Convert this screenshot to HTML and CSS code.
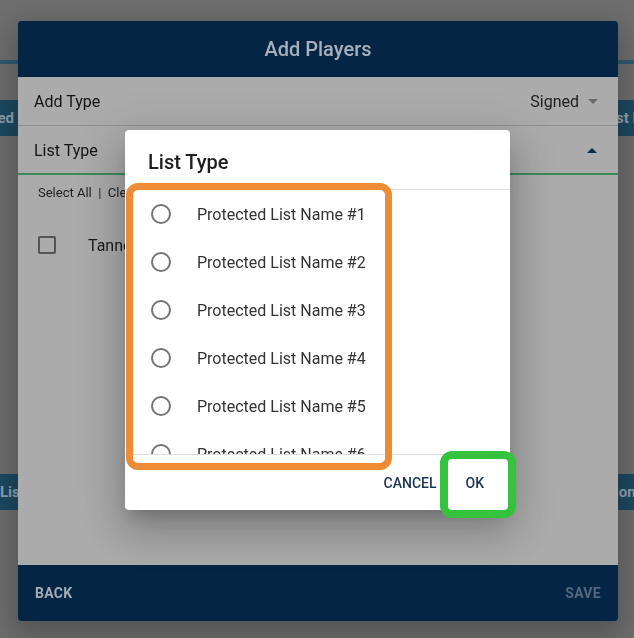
FILE: index.html
```html
<!DOCTYPE html>
<html>
<head>
<meta charset="utf-8">
<link rel="stylesheet" href="styles.css">
</head>
<body>
<div class="page">
  <div class="page-line"></div>
  <div class="page-row row-a">
    <span class="chip chip-left">Signed</span>
    <span class="chip chip-right">List N</span>
  </div>
  <div class="page-row row-b">
    <span class="chip chip-left2">List</span>
    <span class="chip chip-right2">Position</span>
  </div>
</div>

<div class="modal">
  <div class="modal-header">Add Players</div>
  <div class="modal-body">
    <div class="field">
      <span class="field-label">Add Type</span>
      <span class="field-value">Signed <span class="caret-down"></span></span>
    </div>
    <div class="field field-active">
      <span class="field-label">List Type</span>
      <span class="caret-up"></span>
    </div>
    <div class="select-links">Select All &nbsp;|&nbsp; Clear All</div>
    <div class="player">
      <span class="checkbox"></span>
      <span class="player-name">Tanner Houck</span>
    </div>
  </div>
  <div class="modal-footer">
    <span class="foot-btn">BACK</span>
    <span class="foot-btn disabled">SAVE</span>
  </div>
</div>

<div class="dialog">
  <div class="dialog-title">List Type</div>
  <div class="dialog-list">
    <div class="option"><span class="radio"></span><span>Protected List Name #1</span></div>
    <div class="option"><span class="radio"></span><span>Protected List Name #2</span></div>
    <div class="option"><span class="radio"></span><span>Protected List Name #3</span></div>
    <div class="option"><span class="radio"></span><span>Protected List Name #4</span></div>
    <div class="option"><span class="radio"></span><span>Protected List Name #5</span></div>
    <div class="option"><span class="radio"></span><span>Protected List Name #6</span></div>
    <div class="option"><span class="radio"></span><span>Protected List Name #7</span></div>
  </div>
  <div class="dialog-actions">
    <span class="dlg-btn">CANCEL</span>
    <span class="dlg-btn">OK</span>
  </div>
</div>

<div class="mark mark-orange"></div>
<div class="mark mark-green"></div>
</body>
</html>
```

FILE: styles.css
```css
* { box-sizing: border-box; }
html, body { margin: 0; padding: 0; }
body {
  width: 634px;
  height: 638px;
  overflow: hidden;
  background: #6f6f6f;
  font-family: Roboto, "Liberation Sans", sans-serif;
}
.page {
  height: 638px;
  padding-top: 60px;
}
.page-line {
  height: 4px;
  background: #2f5c73;
}
.page-row {
  display: flex;
  justify-content: space-between;
  height: 36px;
}
.row-a { margin-top: 36px; }
.row-b { margin-top: 338px; }
.chip {
  background: #1c4a62;
  color: #8ea3b0;
  font-weight: 700;
  font-size: 15px;
  line-height: 36px;
  width: 80px;
  white-space: nowrap;
  overflow: hidden;
}
.chip-left { margin-left: -62px; text-align: right; padding-right: 4px; }
.chip-right { margin-right: -44px; padding-left: 6px; }
.chip-left2 { margin-left: -62px; padding-left: 62px; }
.chip-right2 { margin-right: -20px; width: 80px; padding-left: 6px; }

.modal {
  position: fixed;
  left: 18px;
  top: 21px;
  width: 600px;
  height: 600px;
  display: flex;
  flex-direction: column;
  background: #ababab;
  border-radius: 3px;
  overflow: hidden;
  box-shadow: 0 10px 30px 6px rgba(0,0,0,0.25);
}
.modal-header {
  height: 56px;
  flex: none;
  background: #052544;
  color: #a9b0ba;
  font-size: 20px;
  font-weight: 500;
  display: flex;
  align-items: center;
  justify-content: center;
}
.modal-body {
  flex: 1;
}
.field {
  height: 49px;
  display: flex;
  align-items: center;
  justify-content: space-between;
  padding: 0 20px 0 16px;
  border-bottom: 1px solid #8f8f8f;
  color: #141414;
  font-size: 16px;
}
.field-active {
  border-bottom: 2px solid #3c8a58;
  height: 49px;
  padding-top: 1px;
}
.field-value {
  display: flex;
  align-items: center;
  gap: 9px;
  color: #1e1e1e;
}
.caret-down {
  width: 0; height: 0;
  border-left: 5px solid transparent;
  border-right: 5px solid transparent;
  border-top: 5px solid #6a6a6a;
}
.caret-up {
  width: 0; height: 0;
  border-left: 5px solid transparent;
  border-right: 5px solid transparent;
  border-bottom: 5px solid #0e2a45;
  margin-right: 1px;
}
.select-links {
  padding: 10px 20px 0;
  font-size: 13px;
  color: #1e1e1e;
  line-height: 15px;
}
.player {
  display: flex;
  align-items: center;
  padding: 0 20px;
  margin-top: 36px;
  height: 18px;
}
.checkbox {
  width: 18px;
  height: 18px;
  border: 2px solid #555;
  border-radius: 2px;
}
.player-name {
  margin-left: 32px;
  font-size: 16px;
  color: #1a1a1a;
}
.modal-footer {
  height: 56px;
  flex: none;
  background: #052544;
  display: flex;
  align-items: center;
  justify-content: space-between;
  padding: 0 17px 0 17px;
}
.foot-btn {
  font-size: 14px;
  font-weight: 700;
  color: #a3abb5;
  letter-spacing: 0.3px;
}
.foot-btn.disabled { color: #55677e; }

.dialog {
  position: fixed;
  left: 125px;
  top: 130px;
  width: 385px;
  height: 380px;
  background: #fff;
  border-radius: 4px;
  display: flex;
  flex-direction: column;
  box-shadow: 0 11px 15px -7px rgba(0,0,0,.2), 0 24px 38px 3px rgba(0,0,0,.14), 0 9px 46px 8px rgba(0,0,0,.12);
}
.dialog-title {
  height: 60px;
  flex: none;
  padding: 20px 23px 0;
  font-size: 20px;
  font-weight: 500;
  color: #1f1f1f;
  line-height: 24px;
  border-bottom: 1px solid #dedede;
}
.dialog-list {
  height: 265px;
  flex: none;
  overflow: hidden;
  border-bottom: 1px solid #dedede;
}
.option {
  height: 48px;
  display: flex;
  align-items: center;
  padding-left: 26px;
  font-size: 16px;
  color: #333;
}
.radio {
  width: 20px;
  height: 20px;
  border: 2px solid #757575;
  border-radius: 50%;
  margin-right: 26px;
  flex: none;
}
.dialog-actions {
  flex: 1;
  display: flex;
  align-items: center;
  justify-content: flex-end;
  gap: 29px;
  padding-right: 26px;
}
.dlg-btn {
  font-size: 14px;
  font-weight: 500;
  color: #1c3553;
}

.mark {
  position: fixed;
  border-radius: 12px;
}
.mark-orange {
  left: 126px;
  top: 183px;
  width: 266px;
  height: 287px;
  border: 7px solid #ee8b36;
}
.mark-green {
  left: 440px;
  top: 451px;
  width: 76px;
  height: 67px;
  border: 8px solid #35c33d;
}
```
